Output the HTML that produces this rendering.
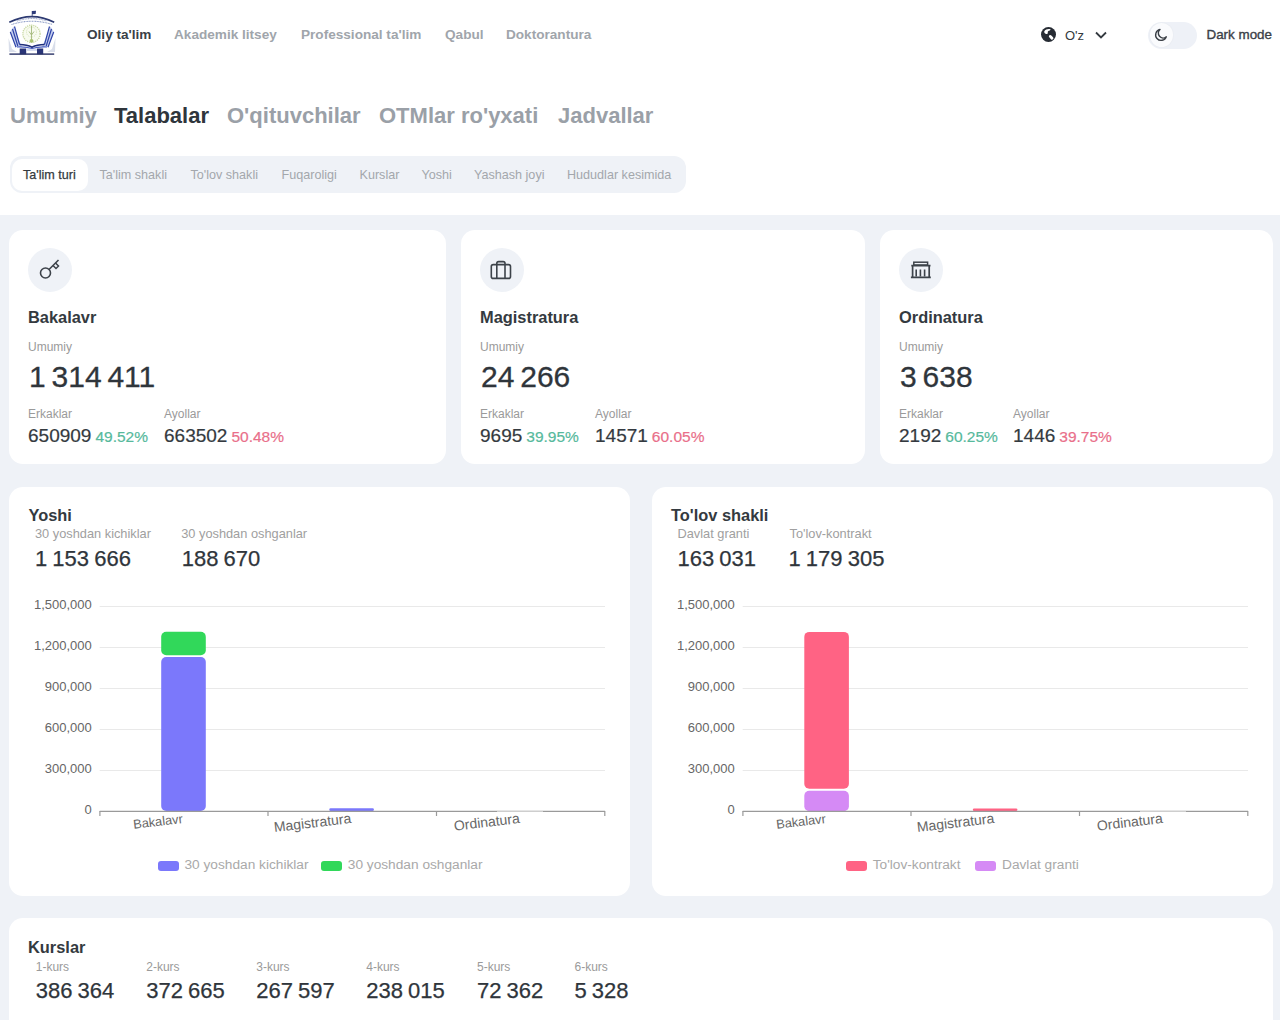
<!DOCTYPE html>
<html><head><meta charset="utf-8">
<style>
*{box-sizing:border-box;margin:0;padding:0}
html,body{width:1280px;height:1020px;overflow:hidden;background:#fff;font-family:"Liberation Sans",sans-serif;color:#343a40}
.a{position:absolute;white-space:nowrap;line-height:1}
.b{font-weight:700}
#bg{position:absolute;left:0;top:215px;width:1280px;height:805px;background:#eff2f7}
.card{position:absolute;background:#fff;border-radius:14px}
.nav{font-size:13.6px;font-weight:700;color:#a0a5ab}
.tab{font-size:22px;font-weight:700;color:#9aa0a7}
.pill{font-size:12.6px;color:#a3a7ac}
.ic{position:absolute;width:44px;height:44px;border-radius:50%;background:#eff2f7}
.ct{font-size:16.4px;font-weight:700;color:#343a40}
.lb{font-size:12px;color:#9a9a9a}
.big{font-size:30px;color:#2f353b;word-spacing:-2.5px;-webkit-text-stroke:0.3px #2f353b}
.num{font-size:19px;color:#343a40;-webkit-text-stroke:0.2px #343a40}
.pg{font-size:15.5px;color:#56b99c;-webkit-text-stroke:0.2px #56b99c}
.pr{font-size:15.5px;color:#e96f8a;-webkit-text-stroke:0.2px #e96f8a}
.sl{font-size:12.8px;color:#a0a0a0}
.sn{font-size:22px;color:#2f353b;word-spacing:-1px;-webkit-text-stroke:0.25px #2f353b}
.yl{font-size:13px;color:#666;text-align:right}
.xl{font-size:13.5px;color:#666;transform-origin:100% 0;transform:rotate(-6.7deg)}
.lg{font-size:13.7px;color:#a9a9a9}
</style></head><body>
<!-- header -->
<svg class="a" style="left:0;top:0" width="64" height="62" viewBox="0 0 64 62">
  <path d="M32.2 17 V11" stroke="#3a4680" stroke-width="0.8"/>
  <path d="M32 11 L36 10.8 L35.6 14 L32 14.2 Z" fill="#2c3a7a"/>
  <path d="M9.3 22.3 Q32 11 54.2 22.3" fill="none" stroke="#2d3a72" stroke-width="1.6"/>
  <path d="M17 21 Q32 16 47 21" fill="none" stroke="#9aa6c8" stroke-width="1.1" stroke-dasharray="1 0.6"/>
  <path d="M11.5 24.5 Q32 18 52.5 24.5" fill="none" stroke="#8c9bc6" stroke-width="1.1" stroke-dasharray="1 0.6"/>
  <circle cx="31.5" cy="33.8" r="8.6" fill="#f8fbf0" stroke="#c9d9a4" stroke-width="1.4" stroke-dasharray="1.2 0.9"/>
  <circle cx="31.5" cy="32" r="5" fill="none" stroke="#d4e2b5" stroke-width="1" stroke-dasharray="1 1"/>
  <path d="M31.5 41 V26 M31.5 35 L29 31.5 M31.5 35 L34 31.5" stroke="#a3b87a" stroke-width="0.9" fill="none"/>
  <circle cx="31.5" cy="40.8" r="1.9" fill="#a8c070"/>
  <path d="M10 32 L16 47 L22 47 L13.5 26.5 Z" fill="#c7d0ef"/>
  <path d="M54 32 L48 47 L42 47 L50.5 26.5 Z" fill="#c7d0ef"/>
  <path d="M14.5 26.5 L19.5 44.5 M12.5 29 L17.8 46 M10.3 32 L16 47.3" stroke="#2f44a8" stroke-width="1.2" fill="none"/>
  <path d="M49.5 26.5 L44.5 44.5 M51.5 29 L46.2 46 M53.7 32 L48 47.3" stroke="#2f44a8" stroke-width="1.2" fill="none"/>
  <path d="M19.5 44.5 Q27 44.5 32 47.2 Q37 44.5 44.5 44.5" fill="none" stroke="#1f2e7a" stroke-width="1.6"/>
  <path d="M17 47 Q26 46.5 32 48.5 Q38 46.5 47 47" fill="none" stroke="#4a5fc0" stroke-width="1.1"/>
  <path d="M8.5 38 L12 49 L17 52 L9 52 Z" fill="#d9deea"/>
  <path d="M55.5 38 L52 49 L47 52 L55 52 Z" fill="#d9deea"/>
  <rect x="19.7" y="48.5" width="6.5" height="5.8" fill="#2a3578"/>
  <rect x="37" y="48.5" width="6.2" height="5.8" fill="#2a3578"/>
  <rect x="26.2" y="49" width="10.8" height="2" fill="#d6dcf0"/>
  <rect x="9.4" y="53.4" width="44.8" height="1.4" fill="#2a3266"/>
</svg>
<div class="a nav" style="left:87px;top:28.3px;color:#3a4047">Oliy ta'lim</div>
<div class="a nav" style="left:174px;top:28.3px">Akademik litsey</div>
<div class="a nav" style="left:301px;top:28.3px">Professional ta'lim</div>
<div class="a nav" style="left:445px;top:28.3px">Qabul</div>
<div class="a nav" style="left:506px;top:28.3px">Doktorantura</div>

<svg class="a" style="left:1040px;top:26px" width="17" height="17" viewBox="0 0 17 17">
  <circle cx="8.5" cy="8.5" r="7.5" fill="#262b33"/>
  <path d="M4.3 5.2 C5.5 3.2 8.5 2.6 10.4 3.3 C10.8 3.7 10.2 4.6 9 4.8 C8 5 7.6 5.8 7.8 6.8 C7.9 7.8 7 8.3 6 8 C4.8 7.6 4 6.4 4.3 5.2 Z" fill="#fff"/>
  <path d="M10.3 10.4 L12 12.3" stroke="#fff" stroke-width="2.8" stroke-linecap="round"/>
</svg>
<div class="a" style="left:1065px;top:28.8px;font-size:13px;color:#343a40">O'z</div>
<svg class="a" style="left:1094px;top:30px" width="14" height="10" viewBox="0 0 14 10">
  <path d="M2 2.5 L7 7.5 L12 2.5" fill="none" stroke="#343a40" stroke-width="1.8"/>
</svg>
<div class="a" style="left:1148px;top:21.5px;width:49px;height:27px;border-radius:14px;background:#eef1f7"></div>
<div class="a" style="left:1149.5px;top:23.3px;width:23.5px;height:23.5px;border-radius:50%;background:#fafbfd;box-shadow:0 0 1.5px rgba(0,0,0,.07)"></div>
<svg class="a" style="left:1154px;top:28px" width="14" height="14" viewBox="0 0 14 14">
  <path d="M6 1.5 A5.5 5.5 0 1 0 12.3 8.8 A4.3 4.3 0 0 1 6 1.5 Z" fill="none" stroke="#3a3f46" stroke-width="1.4" stroke-linejoin="round"/>
</svg>
<div class="a" style="left:1206.5px;top:28px;font-size:13.4px;color:#3a4047;-webkit-text-stroke:0.35px #3a4047">Dark mode</div>

<!-- big tabs -->
<div class="a tab" style="left:10px;top:105px">Umumiy</div>
<div class="a tab" style="left:114px;top:105px;color:#2f353b">Talabalar</div>
<div class="a tab" style="left:227px;top:105px">O'qituvchilar</div>
<div class="a tab" style="left:379px;top:105px">OTMlar ro'yxati</div>
<div class="a tab" style="left:558px;top:105px">Jadvallar</div>

<!-- pills -->
<div class="a" style="left:10px;top:156px;width:676px;height:37px;border-radius:12px;background:#eff2f7"></div>
<div class="a" style="left:12px;top:158.5px;width:76px;height:32.5px;border-radius:10px;background:#fff"></div>
<div class="a pill" style="left:23px;top:168.5px;color:#343a40;-webkit-text-stroke:0.25px #343a40">Ta'lim turi</div>
<div class="a pill" style="left:99.5px;top:168.5px">Ta'lim shakli</div>
<div class="a pill" style="left:190.5px;top:168.5px">To'lov shakli</div>
<div class="a pill" style="left:281.5px;top:168.5px">Fuqaroligi</div>
<div class="a pill" style="left:359.5px;top:168.5px">Kurslar</div>
<div class="a pill" style="left:421.5px;top:168.5px">Yoshi</div>
<div class="a pill" style="left:474px;top:168.5px">Yashash joyi</div>
<div class="a pill" style="left:567px;top:168.5px">Hududlar kesimida</div>

<div id="bg"></div>
<!-- CARDS_ROW1 -->
<div class="card" style="left:9px;top:230px;width:437px;height:234px"></div>
<div class="ic" style="left:28px;top:248px"></div>
<svg class="a" style="left:28px;top:248px" width="44" height="44" viewBox="0 0 44 44">
<circle cx="17.5" cy="25" r="5" fill="none" stroke="#3d434a" stroke-width="1.6"/>
<path d="M21 21.5 L30.5 12" stroke="#3d434a" stroke-width="1.6" fill="none"/>
<path d="M25 17.5 L28 20.5 L30.5 18 L27.5 15" stroke="#3d434a" stroke-width="1.5" fill="none" stroke-linejoin="miter"/>
</svg>
<div class="a ct" style="left:28px;top:309px">Bakalavr</div>
<div class="a lb" style="left:28px;top:341px">Umumiy</div>
<div class="a big" style="left:29px;top:361.5px">1 314 411</div>
<div class="a lb" style="left:28px;top:407.5px">Erkaklar</div>
<div class="a lb" style="left:164px;top:407.5px">Ayollar</div>
<div class="a" style="left:28px;top:426px;font-size:0"><span class="num">650909</span> <span class="pg" style="margin-left:4px">49.52%</span></div>
<div class="a" style="left:164px;top:426px;font-size:0"><span class="num">663502</span> <span class="pr" style="margin-left:4px">50.48%</span></div>
<div class="card" style="left:461px;top:230px;width:404px;height:234px"></div>
<div class="ic" style="left:480px;top:248px"></div>
<svg class="a" style="left:480px;top:248px" width="44" height="44" viewBox="0 0 44 44">
<rect x="11.3" y="16.6" width="19.2" height="13.8" rx="2" fill="none" stroke="#3d434a" stroke-width="1.6"/>
<path d="M16.8 30.4 V15.3 Q16.8 13.6 18.6 13.6 H23.2 Q25 13.6 25 15.3 V30.4" fill="none" stroke="#3d434a" stroke-width="1.6"/>
</svg>
<div class="a ct" style="left:480px;top:309px">Magistratura</div>
<div class="a lb" style="left:480px;top:341px">Umumiy</div>
<div class="a big" style="left:481px;top:361.5px">24 266</div>
<div class="a lb" style="left:480px;top:407.5px">Erkaklar</div>
<div class="a lb" style="left:595px;top:407.5px">Ayollar</div>
<div class="a" style="left:480px;top:426px;font-size:0"><span class="num">9695</span> <span class="pg" style="margin-left:4px">39.95%</span></div>
<div class="a" style="left:595px;top:426px;font-size:0"><span class="num">14571</span> <span class="pr" style="margin-left:4px">60.05%</span></div>
<div class="card" style="left:880px;top:230px;width:393px;height:234px"></div>
<div class="ic" style="left:899px;top:248px"></div>
<svg class="a" style="left:899px;top:248px" width="44" height="44" viewBox="0 0 44 44">
<rect x="14.8" y="14.2" width="13.8" height="2.8" fill="none" stroke="#3d434a" stroke-width="1.5"/>
<path d="M12.3 17.6 H31.5 M13.6 17.6 V29 M30.2 17.6 V29 M11.9 29.3 H31.8" fill="none" stroke="#3d434a" stroke-width="1.7"/>
<path d="M17.2 21.5 V28.5 M21.4 21.5 V28.5 M25.6 21.5 V28.5" stroke="#3d434a" stroke-width="1.6"/>
</svg>
<div class="a ct" style="left:899px;top:309px">Ordinatura</div>
<div class="a lb" style="left:899px;top:341px">Umumiy</div>
<div class="a big" style="left:900px;top:361.5px">3 638</div>
<div class="a lb" style="left:899px;top:407.5px">Erkaklar</div>
<div class="a lb" style="left:1013px;top:407.5px">Ayollar</div>
<div class="a" style="left:899px;top:426px;font-size:0"><span class="num">2192</span> <span class="pg" style="margin-left:4px">60.25%</span></div>
<div class="a" style="left:1013px;top:426px;font-size:0"><span class="num">1446</span> <span class="pr" style="margin-left:4px">39.75%</span></div>

<!-- CHARTS -->
<div class="card" style="left:9px;top:487px;width:620.5px;height:409px"></div>
<div class="a ct" style="left:28.5px;top:507.1px">Yoshi</div>
<div class="a sl" style="left:35px;top:527.9px">30 yoshdan kichiklar</div>
<div class="a sl" style="left:181.2px;top:527.9px">30 yoshdan oshganlar</div>
<div class="a sn" style="left:35px;top:547.5px">1 153 666</div>
<div class="a sn" style="left:181.7px;top:547.5px">188 670</div>
<svg class="a" style="left:0px;top:590px" width="640" height="260" viewBox="0 590 640 260">
<line x1="99.7" y1="606.5" x2="605" y2="606.5" stroke="#e9e9e9" stroke-width="1"/>
<text x="91.8" y="610.90" text-anchor="end" font-family="Liberation Sans" font-size="13" fill="#666" dy="-1.5">1,500,000</text>
<line x1="99.7" y1="647.5" x2="605" y2="647.5" stroke="#e9e9e9" stroke-width="1"/>
<text x="91.8" y="651.84" text-anchor="end" font-family="Liberation Sans" font-size="13" fill="#666" dy="-1.5">1,200,000</text>
<line x1="99.7" y1="688.5" x2="605" y2="688.5" stroke="#e9e9e9" stroke-width="1"/>
<text x="91.8" y="692.78" text-anchor="end" font-family="Liberation Sans" font-size="13" fill="#666" dy="-1.5">900,000</text>
<line x1="99.7" y1="729.5" x2="605" y2="729.5" stroke="#e9e9e9" stroke-width="1"/>
<text x="91.8" y="733.72" text-anchor="end" font-family="Liberation Sans" font-size="13" fill="#666" dy="-1.5">600,000</text>
<line x1="99.7" y1="770.5" x2="605" y2="770.5" stroke="#e9e9e9" stroke-width="1"/>
<text x="91.8" y="774.66" text-anchor="end" font-family="Liberation Sans" font-size="13" fill="#666" dy="-1.5">300,000</text>
<text x="91.8" y="815.60" text-anchor="end" font-family="Liberation Sans" font-size="13" fill="#666" dy="-1.5">0</text>
<rect x="161.2" y="657" width="44.6" height="154.00" rx="5.00" fill="#7b78fb"/>
<rect x="161.2" y="631.8" width="44.6" height="23.50" rx="5.00" fill="#31d85a"/>
<rect x="329.3" y="808.3" width="44.6" height="2.7" rx="1.3" fill="#7b78fb"/>
<line x1="99.7" y1="811.3" x2="605" y2="811.3" stroke="#9a9a9a" stroke-width="1.2"/><rect x="497" y="810.3" width="46" height="1.4" fill="#e4e4e4"/>
<line x1="99.9" y1="811" x2="99.9" y2="816" stroke="#9a9a9a" stroke-width="1.2"/>
<line x1="268" y1="811" x2="268" y2="816" stroke="#9a9a9a" stroke-width="1.2"/>
<line x1="436.5" y1="811" x2="436.5" y2="816" stroke="#9a9a9a" stroke-width="1.2"/>
<line x1="604.8" y1="811" x2="604.8" y2="816" stroke="#9a9a9a" stroke-width="1.2"/>
<text x="182.0" y="823" text-anchor="end" transform="rotate(-6.7 182.0 813)" font-family="Liberation Sans" font-size="12.8" fill="#666">Bakalavr</text>
<text x="350.5" y="823" text-anchor="end" transform="rotate(-6.7 350.5 813)" font-family="Liberation Sans" font-size="14" fill="#666">Magistratura</text>
<text x="519.0" y="823" text-anchor="end" transform="rotate(-6.7 519.0 813)" font-family="Liberation Sans" font-size="14" fill="#666">Ordinatura</text>
</svg>
<div class="a" style="left:157.8px;top:860.6px;width:21px;height:10px;border-radius:3px;background:#7b78fb"></div>
<div class="a lg" style="left:184.5px;top:858.4px">30 yoshdan kichiklar</div>
<div class="a" style="left:321.1px;top:860.6px;width:21px;height:10px;border-radius:3px;background:#31d85a"></div>
<div class="a lg" style="left:347.8px;top:858.4px">30 yoshdan oshganlar</div>
<div class="card" style="left:651.5px;top:487px;width:621.5px;height:409px"></div>
<div class="a ct" style="left:671.0px;top:507.1px">To'lov shakli</div>
<div class="a sl" style="left:677.5px;top:527.9px">Davlat granti</div>
<div class="a sl" style="left:789.5px;top:527.9px">To'lov-kontrakt</div>
<div class="a sn" style="left:677.5px;top:547.5px">163 031</div>
<div class="a sn" style="left:788.5px;top:547.5px">1 179 305</div>
<svg class="a" style="left:642.5px;top:590px" width="640" height="260" viewBox="0 590 640 260">
<line x1="99.7" y1="606.5" x2="605" y2="606.5" stroke="#e9e9e9" stroke-width="1"/>
<text x="91.8" y="610.90" text-anchor="end" font-family="Liberation Sans" font-size="13" fill="#666" dy="-1.5">1,500,000</text>
<line x1="99.7" y1="647.5" x2="605" y2="647.5" stroke="#e9e9e9" stroke-width="1"/>
<text x="91.8" y="651.84" text-anchor="end" font-family="Liberation Sans" font-size="13" fill="#666" dy="-1.5">1,200,000</text>
<line x1="99.7" y1="688.5" x2="605" y2="688.5" stroke="#e9e9e9" stroke-width="1"/>
<text x="91.8" y="692.78" text-anchor="end" font-family="Liberation Sans" font-size="13" fill="#666" dy="-1.5">900,000</text>
<line x1="99.7" y1="729.5" x2="605" y2="729.5" stroke="#e9e9e9" stroke-width="1"/>
<text x="91.8" y="733.72" text-anchor="end" font-family="Liberation Sans" font-size="13" fill="#666" dy="-1.5">600,000</text>
<line x1="99.7" y1="770.5" x2="605" y2="770.5" stroke="#e9e9e9" stroke-width="1"/>
<text x="91.8" y="774.66" text-anchor="end" font-family="Liberation Sans" font-size="13" fill="#666" dy="-1.5">300,000</text>
<text x="91.8" y="815.60" text-anchor="end" font-family="Liberation Sans" font-size="13" fill="#666" dy="-1.5">0</text>
<rect x="161.3" y="790.7" width="44.6" height="20.50" rx="5.00" fill="#d58af5"/>
<rect x="161.3" y="631.9" width="44.6" height="156.90" rx="5.00" fill="#ff6384"/>
<rect x="329.8" y="808.5" width="44.6" height="2.50" rx="1.25" fill="#ff6384"/>
<line x1="99.7" y1="811.3" x2="605" y2="811.3" stroke="#9a9a9a" stroke-width="1.2"/><rect x="497" y="810.3" width="46" height="1.4" fill="#e4e4e4"/>
<line x1="99.9" y1="811" x2="99.9" y2="816" stroke="#9a9a9a" stroke-width="1.2"/>
<line x1="268" y1="811" x2="268" y2="816" stroke="#9a9a9a" stroke-width="1.2"/>
<line x1="436.5" y1="811" x2="436.5" y2="816" stroke="#9a9a9a" stroke-width="1.2"/>
<line x1="604.8" y1="811" x2="604.8" y2="816" stroke="#9a9a9a" stroke-width="1.2"/>
<text x="182.0" y="823" text-anchor="end" transform="rotate(-6.7 182.0 813)" font-family="Liberation Sans" font-size="12.8" fill="#666">Bakalavr</text>
<text x="350.5" y="823" text-anchor="end" transform="rotate(-6.7 350.5 813)" font-family="Liberation Sans" font-size="14" fill="#666">Magistratura</text>
<text x="519.0" y="823" text-anchor="end" transform="rotate(-6.7 519.0 813)" font-family="Liberation Sans" font-size="14" fill="#666">Ordinatura</text>
</svg>
<div class="a" style="left:845.9px;top:860.6px;width:21px;height:10px;border-radius:3px;background:#ff6384"></div>
<div class="a lg" style="left:872.7px;top:858.4px">To'lov-kontrakt</div>
<div class="a" style="left:975.2px;top:860.6px;width:21px;height:10px;border-radius:3px;background:#d58af5"></div>
<div class="a lg" style="left:1002.0px;top:858.4px">Davlat granti</div>

<!-- KURSLAR -->
<div class="card" style="left:9px;top:917.5px;width:1264px;height:140px"></div>
<div class="a ct" style="left:28px;top:939px">Kurslar</div>
<div class="a lb" style="left:35.75px;top:960.5px">1-kurs</div>
<div class="a sn" style="left:35.75px;top:979.5px">386 364</div>
<div class="a lb" style="left:146.25px;top:960.5px">2-kurs</div>
<div class="a sn" style="left:146.25px;top:979.5px">372 665</div>
<div class="a lb" style="left:256.25px;top:960.5px">3-kurs</div>
<div class="a sn" style="left:256.25px;top:979.5px">267 597</div>
<div class="a lb" style="left:366.25px;top:960.5px">4-kurs</div>
<div class="a sn" style="left:366.25px;top:979.5px">238 015</div>
<div class="a lb" style="left:477px;top:960.5px">5-kurs</div>
<div class="a sn" style="left:477px;top:979.5px">72 362</div>
<div class="a lb" style="left:574.5px;top:960.5px">6-kurs</div>
<div class="a sn" style="left:574.5px;top:979.5px">5 328</div>

</body></html>
